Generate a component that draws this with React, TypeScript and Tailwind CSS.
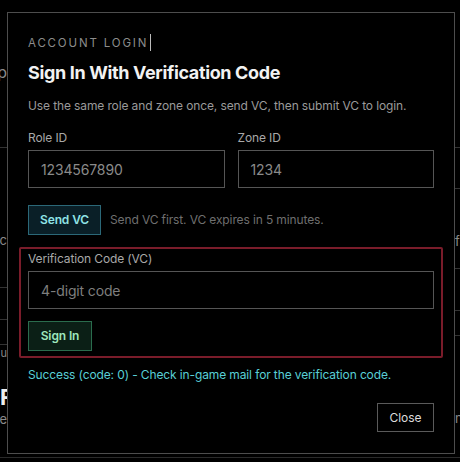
import React from "react";

const font = { fontFamily: "Inter, 'Noto Sans', sans-serif" };

function LeftStrip() {
  return (
    <div className="flex h-full w-[7px] flex-col overflow-hidden text-[#8a8a8a]">
      <div className="h-[62px]" />
      <div className="flex h-[20px] justify-end text-[16px] leading-[20px]">p</div>
      <div className="h-[65px]" />
      <div className="h-px bg-[#333]" />
      <div className="h-[82px]" />
      <div className="flex h-[20px] justify-end text-[13px] leading-[20px] whitespace-nowrap">ic</div>
      <div className="h-[37px]" />
      <div className="h-px bg-[#333]" />
      <div className="h-[31px]" />
      <div className="h-px bg-[#333]" />
      <div className="h-[24px]" />
      <div className="h-px bg-[#333]" />
      <div className="flex h-[16px] justify-end text-[11px] leading-[16px]">u</div>
      <div className="h-[24px]" />
      <div className="flex h-[24px] justify-start text-[22px] font-bold leading-[24px] text-[#eee]">F</div>
      <div className="flex h-[20px] justify-end text-[13px] leading-[20px] whitespace-nowrap">ue</div>
    </div>
  );
}

function RightStrip() {
  return (
    <div className="flex h-full w-[5px] flex-col overflow-hidden text-[#8a8a8a]">
      <div className="h-[147px]" />
      <div className="h-px bg-[#333]" />
      <div className="h-[40px]" />
      <div className="h-px bg-[#333]" />
      <div className="h-[42px]" />
      <div className="flex h-[20px] text-[13px] leading-[20px]">f</div>
      <div className="h-[17px]" />
      <div className="h-px bg-[#333]" />
      <div className="h-[41px]" />
      <div className="h-px bg-[#333]" />
      <div className="h-[24px]" />
      <div className="h-px bg-[#333]" />
      <div className="h-[72px]" />
      <div className="flex h-[20px] text-[13px] leading-[20px]">n</div>
    </div>
  );
}

export default function App() {
  return (
    <div className="relative h-[462px] w-[460px] overflow-hidden bg-black" style={font}>
      <div className="flex h-full w-full justify-between">
        <LeftStrip />
        <RightStrip />
      </div>
      <div className="absolute bottom-[4px] left-0 right-0 h-px bg-[#2a2a2a]" />

      <div className="absolute left-[7px] top-[12px] flex h-[442px] w-[448px] flex-col border border-[#4d4d4d] bg-black px-5 pt-[21px]">
        <div className="flex items-center">
          <span className="text-[11.5px] leading-[16px] tracking-[0.16em] text-[#8c8c8c]">ACCOUNT LOGIN</span>
          <span className="ml-[2px] h-[17px] w-px bg-[#bbb]" />
        </div>
        <h1 className="mt-2 text-[18px] font-bold leading-[28px] tracking-[-0.02em] text-[#f2f2f2]">
          Sign In With Verification Code
        </h1>
        <p className="mt-[9px] text-[12px] leading-[20px] tracking-[-0.01em] text-[#9a9a9a]">
          Use the same role and zone once, send VC, then submit VC to login.
        </p>

        <div className="mt-[12px] grid grid-cols-2 gap-[13px]">
          <div className="flex flex-col">
            <label className="text-[12px] leading-[20px] tracking-[-0.01em] text-[#a8a8a8]">Role ID</label>
            <div className="mt-[2px] flex h-[38px] items-center border border-[#555] px-3 text-[14px] tracking-[-0.01em] text-[#8a8a8a]">
              1234567890
            </div>
          </div>
          <div className="flex flex-col">
            <label className="text-[12px] leading-[20px] tracking-[-0.01em] text-[#a8a8a8]">Zone ID</label>
            <div className="mt-[2px] flex h-[38px] items-center border border-[#555] px-3 text-[14px] tracking-[-0.01em] text-[#8a8a8a]">
              1234
            </div>
          </div>
        </div>

        <div className="mt-[17px] flex items-center gap-[9px]">
          <button className="flex h-[30px] w-[73px] items-center justify-center border border-[#2b6878] bg-[#0a1f27] text-[12px] font-semibold tracking-[-0.01em] text-[#8fe3e6]">
            Send VC
          </button>
          <span className="text-[12px] tracking-[-0.01em] text-[#6f6f6f]">Send VC first. VC expires in 5 minutes.</span>
        </div>

        <div className="-mx-[9px] mt-[12px] flex h-[111px] flex-col rounded-[2px] border-2 border-[#7a1c2a] px-[7px]">
          <label className="text-[12px] leading-[20px] tracking-[-0.01em] text-[#a8a8a8]">Verification Code (VC)</label>
          <div className="mt-[2px] flex h-[38px] items-center border border-[#555] px-3 text-[14px] tracking-[-0.01em] text-[#7e7e7e]">
            4-digit code
          </div>
          <button className="mt-[12px] flex h-[30px] w-[64px] items-center justify-center border border-[#2a6c4d] bg-[#0b1f16] text-[12px] font-semibold tracking-[-0.01em] text-[#9ee6bd]">
            Sign In
          </button>
        </div>

        <p className="mt-[7px] text-[12px] leading-[20px] tracking-[-0.01em] text-[#58cfd6]">
          Success (code: 0) - Check in-game mail for the verification code.
        </p>

        <div className="mt-[18px] flex justify-end">
          <button className="flex h-[29px] w-[57px] items-center justify-center border border-[#5a5a5a] text-[12px] text-[#dcdcdc]">
            Close
          </button>
        </div>
      </div>
    </div>
  );
}
